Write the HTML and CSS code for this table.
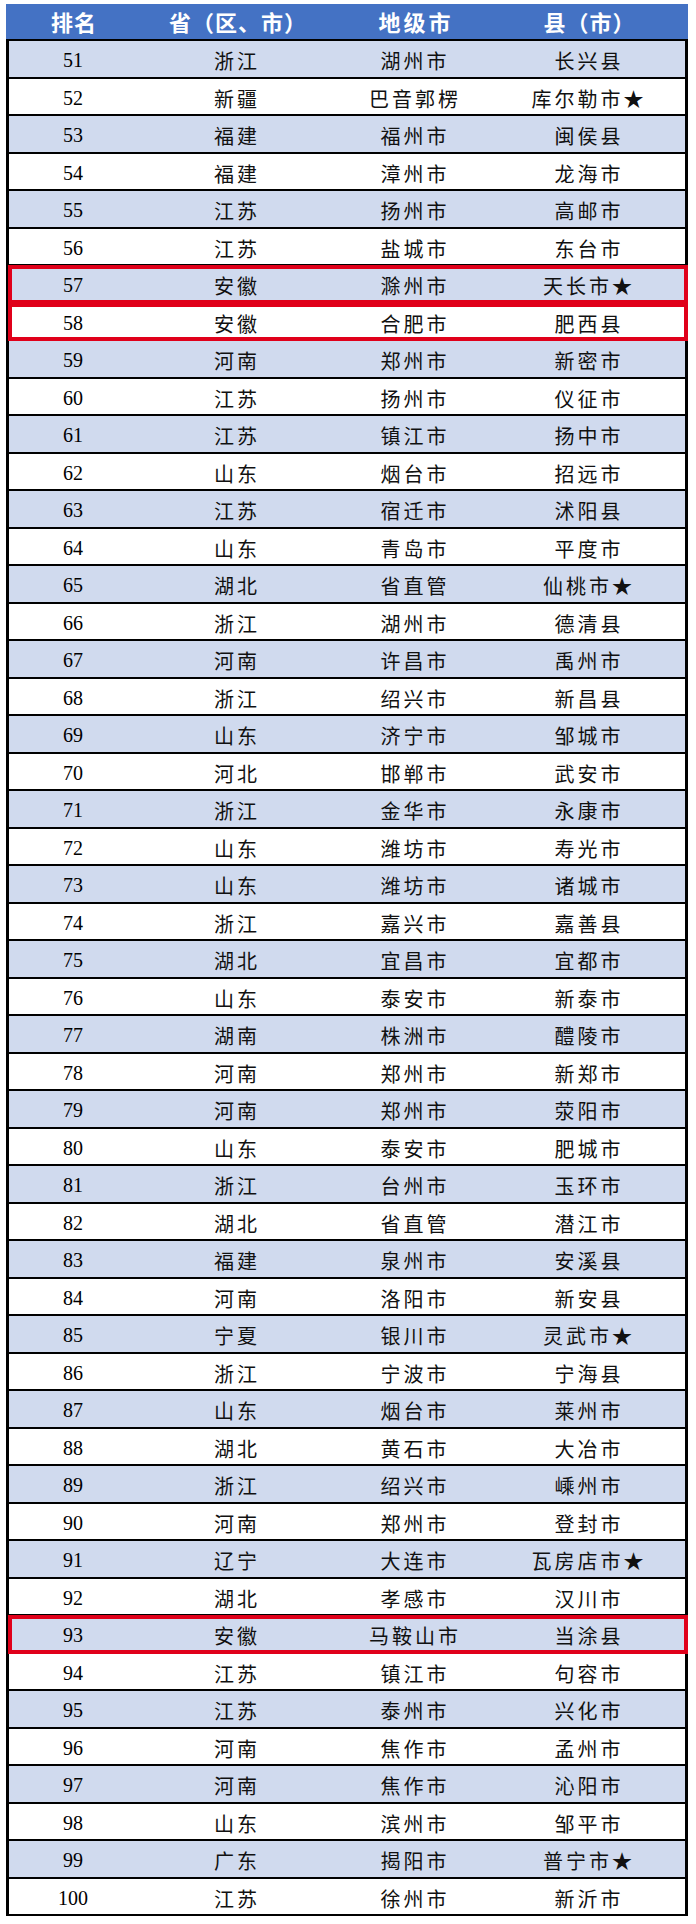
FILE: index.html
```html
<!DOCTYPE html>
<html lang="zh-CN">
<head>
<meta charset="utf-8">
<title>排名</title>
<link rel="stylesheet" href="styles.css">
</head>
<body>
<div class="sheet">
  <div class="head">
    <span class="h-rank">排名</span>
    <span class="h-prov">省（区、市）</span>
    <span class="h-city">地级市</span>
    <span class="h-county">县（市）</span>
  </div>
  <div class="body">
    <div class="row"><span class="num">51</span><span>浙江</span><span>湖州市</span><span>长兴县</span></div>
    <div class="row"><span class="num">52</span><span>新疆</span><span>巴音郭楞</span><span>库尔勒市★</span></div>
    <div class="row"><span class="num">53</span><span>福建</span><span>福州市</span><span>闽侯县</span></div>
    <div class="row"><span class="num">54</span><span>福建</span><span>漳州市</span><span>龙海市</span></div>
    <div class="row"><span class="num">55</span><span>江苏</span><span>扬州市</span><span>高邮市</span></div>
    <div class="row"><span class="num">56</span><span>江苏</span><span>盐城市</span><span>东台市</span></div>
    <div class="row hl"><span class="num">57</span><span>安徽</span><span>滁州市</span><span>天长市★</span></div>
    <div class="row hl"><span class="num">58</span><span>安徽</span><span>合肥市</span><span>肥西县</span></div>
    <div class="row"><span class="num">59</span><span>河南</span><span>郑州市</span><span>新密市</span></div>
    <div class="row"><span class="num">60</span><span>江苏</span><span>扬州市</span><span>仪征市</span></div>
    <div class="row"><span class="num">61</span><span>江苏</span><span>镇江市</span><span>扬中市</span></div>
    <div class="row"><span class="num">62</span><span>山东</span><span>烟台市</span><span>招远市</span></div>
    <div class="row"><span class="num">63</span><span>江苏</span><span>宿迁市</span><span>沭阳县</span></div>
    <div class="row"><span class="num">64</span><span>山东</span><span>青岛市</span><span>平度市</span></div>
    <div class="row"><span class="num">65</span><span>湖北</span><span>省直管</span><span>仙桃市★</span></div>
    <div class="row"><span class="num">66</span><span>浙江</span><span>湖州市</span><span>德清县</span></div>
    <div class="row"><span class="num">67</span><span>河南</span><span>许昌市</span><span>禹州市</span></div>
    <div class="row"><span class="num">68</span><span>浙江</span><span>绍兴市</span><span>新昌县</span></div>
    <div class="row"><span class="num">69</span><span>山东</span><span>济宁市</span><span>邹城市</span></div>
    <div class="row"><span class="num">70</span><span>河北</span><span>邯郸市</span><span>武安市</span></div>
    <div class="row"><span class="num">71</span><span>浙江</span><span>金华市</span><span>永康市</span></div>
    <div class="row"><span class="num">72</span><span>山东</span><span>潍坊市</span><span>寿光市</span></div>
    <div class="row"><span class="num">73</span><span>山东</span><span>潍坊市</span><span>诸城市</span></div>
    <div class="row"><span class="num">74</span><span>浙江</span><span>嘉兴市</span><span>嘉善县</span></div>
    <div class="row"><span class="num">75</span><span>湖北</span><span>宜昌市</span><span>宜都市</span></div>
    <div class="row"><span class="num">76</span><span>山东</span><span>泰安市</span><span>新泰市</span></div>
    <div class="row"><span class="num">77</span><span>湖南</span><span>株洲市</span><span>醴陵市</span></div>
    <div class="row"><span class="num">78</span><span>河南</span><span>郑州市</span><span>新郑市</span></div>
    <div class="row"><span class="num">79</span><span>河南</span><span>郑州市</span><span>荥阳市</span></div>
    <div class="row"><span class="num">80</span><span>山东</span><span>泰安市</span><span>肥城市</span></div>
    <div class="row"><span class="num">81</span><span>浙江</span><span>台州市</span><span>玉环市</span></div>
    <div class="row"><span class="num">82</span><span>湖北</span><span>省直管</span><span>潜江市</span></div>
    <div class="row"><span class="num">83</span><span>福建</span><span>泉州市</span><span>安溪县</span></div>
    <div class="row"><span class="num">84</span><span>河南</span><span>洛阳市</span><span>新安县</span></div>
    <div class="row"><span class="num">85</span><span>宁夏</span><span>银川市</span><span>灵武市★</span></div>
    <div class="row"><span class="num">86</span><span>浙江</span><span>宁波市</span><span>宁海县</span></div>
    <div class="row"><span class="num">87</span><span>山东</span><span>烟台市</span><span>莱州市</span></div>
    <div class="row"><span class="num">88</span><span>湖北</span><span>黄石市</span><span>大冶市</span></div>
    <div class="row"><span class="num">89</span><span>浙江</span><span>绍兴市</span><span>嵊州市</span></div>
    <div class="row"><span class="num">90</span><span>河南</span><span>郑州市</span><span>登封市</span></div>
    <div class="row"><span class="num">91</span><span>辽宁</span><span>大连市</span><span>瓦房店市★</span></div>
    <div class="row"><span class="num">92</span><span>湖北</span><span>孝感市</span><span>汉川市</span></div>
    <div class="row hl"><span class="num">93</span><span>安徽</span><span>马鞍山市</span><span>当涂县</span></div>
    <div class="row"><span class="num">94</span><span>江苏</span><span>镇江市</span><span>句容市</span></div>
    <div class="row"><span class="num">95</span><span>江苏</span><span>泰州市</span><span>兴化市</span></div>
    <div class="row"><span class="num">96</span><span>河南</span><span>焦作市</span><span>孟州市</span></div>
    <div class="row"><span class="num">97</span><span>河南</span><span>焦作市</span><span>沁阳市</span></div>
    <div class="row"><span class="num">98</span><span>山东</span><span>滨州市</span><span>邹平市</span></div>
    <div class="row"><span class="num">99</span><span>广东</span><span>揭阳市</span><span>普宁市★</span></div>
    <div class="row"><span class="num">100</span><span>江苏</span><span>徐州市</span><span>新沂市</span></div>
  </div>
</div>
</body>
</html>
```

FILE: styles.css
```css
html, body {
  margin: 0;
  padding: 0;
  background: #ffffff;
}

.sheet {
  width: 682px;
  margin-left: 6px;
  padding-top: 4px;
}

.head {
  height: 35px;
  background: #4472c4;
  padding: 0 3px 0 4px;
  display: grid;
  grid-template-columns: 128px 200px 156px 191px;
  align-items: center;
  color: #ffffff;
  font-family: "Noto Sans CJK SC", "Noto Sans", sans-serif;
  font-weight: 700;
  font-size: 22px;
  line-height: 35px;
}

.head span {
  text-align: center;
  letter-spacing: 1px;
}

.head .h-city {
  letter-spacing: 3px;
}

.body {
  border-left: 3px solid #000000;
  border-right: 3px solid #000000;
  border-top: 2px solid #000000;
}

.row {
  position: relative;
  height: 35.5px;
  border-bottom: 2px solid #000000;
  display: grid;
  grid-template-columns: 128px 200px 156px 192px;
  align-items: center;
  font-family: "Noto Sans CJK SC", "Noto Sans", sans-serif;
  font-weight: 400;
  font-size: 20px;
  color: #111111;
  background: #ffffff;
}

.row:nth-child(odd) {
  background: #d0daee;
}

.row span {
  text-align: center;
  letter-spacing: 3px;
  line-height: 35.5px;
  padding-top: 2px;
}

.row .num {
  font-family: "Liberation Serif", "Times New Roman", serif;
  font-weight: 400;
  font-size: 20px;
  letter-spacing: 0;
  color: #000000;
}

.hl::after {
  content: "";
  position: absolute;
  left: -1px;
  right: -3px;
  top: -1px;
  bottom: -2px;
  border: 4px solid #e0001a;
  z-index: 1;
  pointer-events: none;
}
```
